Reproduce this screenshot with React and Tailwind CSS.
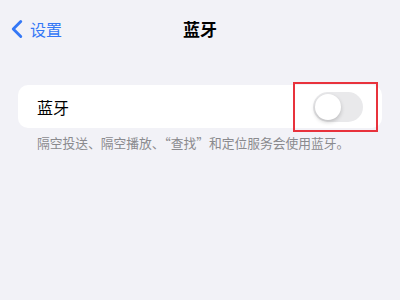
import { ChevronLeft } from 'lucide-react'

const cjk = { fontFamily: '"Noto Sans CJK SC", "Noto Sans", sans-serif' }

export default function App() {
  return (
    <div className="w-[400px] h-[300px] bg-[#f2f2f7] overflow-hidden" style={cjk}>
      <div className="h-[57px] flex items-center relative">
        <div className="flex items-center pl-[2px] text-[#3478f6]">
          <ChevronLeft size={30} strokeWidth={2.3} />
          <span className="text-[16px] leading-none -ml-[2px]">设置</span>
        </div>
        <div className="absolute left-0 right-0 text-center text-[17px] font-bold leading-none text-black">蓝牙</div>
      </div>

      <div className="px-[18px] pt-[28px]">
        <div className="bg-white rounded-[10px] h-[43px] flex items-center justify-between pl-[19px] pr-[19px] relative">
          <span className="text-[16px] text-black">蓝牙</span>
          <div className="w-[50px] h-[30px] rounded-full bg-[#e9e9eb] p-[2px] flex items-center">
            <div className="w-[26px] h-[26px] rounded-full bg-white shadow-[0_2px_4px_rgba(0,0,0,0.2)]" />
          </div>
          <div className="absolute left-[275px] top-[-3px] w-[85px] h-[50px] border-2 border-[#e8323c]" />
        </div>
        <p className="pl-[19px] pt-[9px] text-[12.75px] text-[#8a8a8e] leading-none">隔空投送、隔空播放、“查找”和定位服务会使用蓝牙。</p>
      </div>
    </div>
  )
}
